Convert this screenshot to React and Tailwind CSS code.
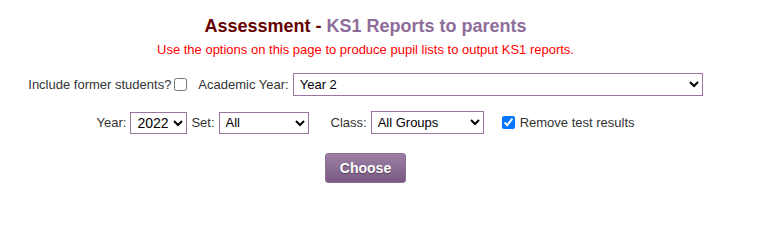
export default function App() {
  const font = { fontFamily: '"Liberation Sans", Arial, sans-serif' };
  return (
    <div className="w-[731px] bg-white pt-[15px] text-[13px] text-[#333]" style={font}>
      <h2 className="text-center text-[18px] leading-[22px] font-bold text-[#660000]">
        Assessment - <span className="text-[#8e6c9a]">KS1 Reports to parents</span>
      </h2>
      <p className="mt-[5px] text-center leading-4 text-[#ff0000]">
        Use the options on this page to produce pupil lists to output KS1 reports.
      </p>

      <div className="mt-[15px] flex items-center justify-center">
        <label className="flex items-center">
          Include former students?
          <input type="checkbox" className="ml-[3px] h-[13px] w-[13px]" />
        </label>
        <span className="ml-[11px]">Academic Year:</span>
        <select className="ml-1 h-[23px] w-[410px] border border-[#9b72a0] px-[2px] text-[13px] text-black">
          <option>Year 2</option>
        </select>
      </div>

      <div className="mt-[15px] flex items-center justify-center">
        <span>Year:</span>
        <select className="ml-1 h-[22px] w-[57px] border border-[#9b72a0] px-[2px] text-[14px] text-black">
          <option>2022</option>
        </select>
        <span className="ml-1">Set:</span>
        <select className="ml-1 h-[22px] w-[90px] border border-[#9b72a0] px-[2px] text-black">
          <option>All</option>
        </select>
        <span className="ml-[22px]">Class:</span>
        <select className="ml-1 h-[23px] w-[113px] border border-[#9b72a0] px-[2px] text-black">
          <option>All Groups</option>
        </select>
        <label className="ml-[18px] flex items-center">
          <input type="checkbox" defaultChecked className="mr-[5px] h-[13px] w-[13px]" />
          Remove test results
        </label>
      </div>

      <div className="mt-[19px] flex justify-center">
        <button className="h-[30px] w-[81px] rounded-[3px] border border-[#8a7090] bg-gradient-to-b from-[#9e80a4] to-[#795982] text-[14px] font-bold text-white [text-shadow:0_1px_1px_rgba(0,0,0,0.4)]">
          Choose
        </button>
      </div>
    </div>
  );
}
